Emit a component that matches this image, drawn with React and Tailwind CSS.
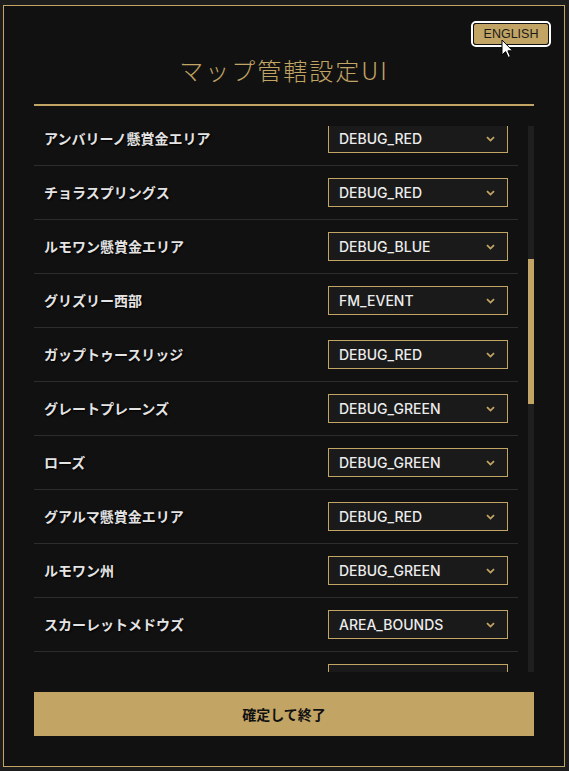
import React from "react";

const rows = [
  ["アンバリーノ懸賞金エリア", "DEBUG_RED"],
  ["チョラスプリングス", "DEBUG_RED"],
  ["ルモワン懸賞金エリア", "DEBUG_BLUE"],
  ["グリズリー西部", "FM_EVENT"],
  ["ガップトゥースリッジ", "DEBUG_RED"],
  ["グレートプレーンズ", "DEBUG_GREEN"],
  ["ローズ", "DEBUG_GREEN"],
  ["グアルマ懸賞金エリア", "DEBUG_RED"],
  ["ルモワン州", "DEBUG_GREEN"],
  ["スカーレットメドウズ", "AREA_BOUNDS"],
  ["ニューハノーバー", "DEBUG_RED"],
];

function Chevron() {
  return (
    <svg width="9" height="6" viewBox="0 0 9 6" fill="none">
      <path d="M1 1.2 L4.5 4.6 L8 1.2" stroke="#c2a464" strokeWidth="1.8" />
    </svg>
  );
}

export default function App() {
  return (
    <div className="w-[569px] h-[771px] bg-[#1d1d1d] pt-[5px] pl-[3px] overflow-hidden">
      <div className="relative w-[562px] h-[762px] bg-[#111111] border border-[#c2a464] px-[30px] pt-[30px] flex flex-col">
        {/* language button */}
        <div className="absolute top-[15px] right-[13px] w-[80px] h-[26px] border-2 border-white rounded-[5px]">
          <div className="w-full h-full bg-[#c2a464] border border-[#111] rounded-[3px] flex items-center justify-center text-[12.5px] text-[#1a1a1a] font-['Liberation_Sans',Arial,sans-serif]">
            ENGLISH
          </div>
        </div>
        {/* cursor */}
        <svg
          className="absolute left-[497px] top-[33px]"
          width="13"
          height="20"
          viewBox="0 0 13 20"
        >
          <path
            d="M1 1 L1 16 L4.6 12.6 L7.2 18.4 L9.4 17.4 L6.9 11.8 L11.6 11.8 Z"
            fill="#fff"
            stroke="#000"
            strokeWidth="1"
            strokeLinejoin="round"
          />
        </svg>

        {/* header */}
        <div className="pt-[18px] pb-[18px] border-b-2 border-[#c2a464] flex justify-center">
          <h1 className="h-[32px] leading-[32px] text-[24px] tracking-[2px] font-light text-[#c2a464] font-['Noto_Sans_CJK_JP',sans-serif]">
            マップ管轄設定UI
          </h1>
        </div>

        {/* list */}
        <div className="mt-[20px] h-[546px] flex gap-[10px]">
          <div className="flex-1 overflow-hidden">
            <div className="-mt-[14px] flex flex-col">
              {rows.map(([label, value], i) => (
                <div
                  key={i}
                  className="flex items-center justify-between py-[12px] pl-[10px] pr-[10px] border-b border-[#2d2d2d]"
                >
                  <span className="text-[14px] font-bold text-[#e4e4e4] font-['Noto_Sans_CJK_JP',sans-serif] [text-shadow:1px_1px_2px_#000]">
                    {label}
                  </span>
                  <div className="w-[180px] h-[29px] bg-[#1a1a1a] border border-[#c2a464] flex items-center justify-between pl-[10px] pr-[12px]">
                    <span className="text-[14px] font-medium text-[#ececec] font-['Inter',sans-serif]">
                      {value}
                    </span>
                    <Chevron />
                  </div>
                </div>
              ))}
            </div>
          </div>
          <div className="w-[6px] h-full bg-[#1f1f1f] flex flex-col">
            <div className="h-[133px]" />
            <div className="h-[145px] bg-[#c2a464]" />
          </div>
        </div>

        {/* confirm */}
        <button className="mt-[20px] h-[44px] w-full bg-[#c2a464] text-[#111] text-[14px] font-bold font-['Noto_Sans_CJK_JP',sans-serif]">
          確定して終了
        </button>
      </div>
    </div>
  );
}
